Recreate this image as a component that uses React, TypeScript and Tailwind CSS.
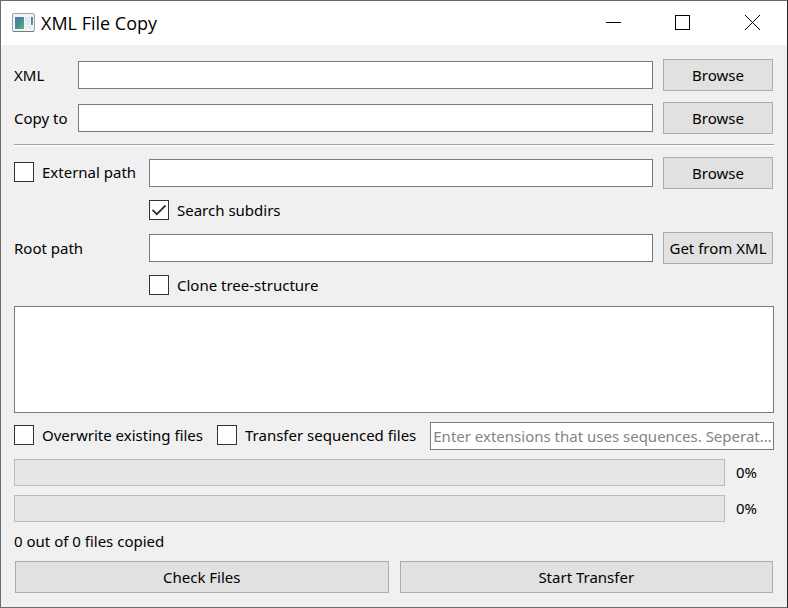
import { useState, type ReactNode } from "react";

const field =
  "h-7 min-w-0 flex-1 rounded-none border border-[#7a7a7a] bg-white pl-0.5 text-ellipsis outline-none placeholder:text-[#848484]";
const button =
  "h-8 rounded-none border border-[#adadad] bg-[#e1e1e1] text-center whitespace-nowrap";

function Check({ label, defaultChecked = false }: { label: string; defaultChecked?: boolean }) {
  return (
    <label className="flex h-[22px] items-center gap-2 pb-0.5 whitespace-nowrap">
      <span className="grid size-5 shrink-0">
        <input
          type="checkbox"
          defaultChecked={defaultChecked}
          className="peer col-start-1 row-start-1 size-5 appearance-none border border-[#333333] bg-white"
        />
        <svg
          viewBox="0 0 20 20"
          className="pointer-events-none invisible col-start-1 row-start-1 size-5 peer-checked:visible"
          fill="none"
          stroke="#333333"
          strokeWidth="1.8"
          aria-hidden="true"
        >
          <path d="M3.5 9.8 L7.8 14.2 L16.5 5.5" />
        </svg>
      </span>
      <span>{label}</span>
    </label>
  );
}

function PathRow({
  id,
  name,
  label,
  labelWidth,
  action,
}: {
  id: string;
  name: string;
  label: ReactNode;
  labelWidth: string;
  action: string;
}) {
  const [value, setValue] = useState("");
  return (
    <div className="flex h-8 items-center">
      <div className={`${labelWidth} shrink-0`}>{label}</div>
      <input
        id={id}
        aria-label={name}
        className={field}
        value={value}
        onChange={(e) => setValue(e.target.value)}
      />
      <button type="button" className={`${button} mr-px ml-2.5 w-[110px]`}>
        {action}
      </button>
    </div>
  );
}

function Progress({ label, value }: { label: string; value: number }) {
  return (
    <div className="flex h-7 items-center gap-[11px]">
      <div
        role="progressbar"
        aria-label={label}
        aria-valuenow={value}
        className="h-[27px] flex-1 border border-[#bcbcbc] bg-[#e6e6e6]"
      >
        <div className="h-full bg-[#06b025]" style={{ width: `${value}%` }} />
      </div>
      <span className="w-[38px]">{value}%</span>
    </div>
  );
}

function AppIcon() {
  return (
    <svg width="24" height="20" viewBox="0 0 24 20" aria-hidden="true">
      <defs>
        <linearGradient id="pane" x1="0" y1="0" x2="1" y2="1">
          <stop offset="0" stopColor="#4a78a8" />
          <stop offset="0.5" stopColor="#3f8f94" />
          <stop offset="1" stopColor="#62b878" />
        </linearGradient>
      </defs>
      <rect x="0.5" y="0.5" width="22" height="18" rx="1.5" fill="#f4f5f6" stroke="#9a9fa2" />
      <path d="M1 18.5 H22" stroke="#777c80" />
      <rect x="3" y="4" width="9" height="12" fill="url(#pane)" />
      <rect x="13" y="4" width="5" height="8" fill="#e3e8ec" />
      <rect x="19" y="4" width="2" height="8" fill="url(#pane)" />
      <rect x="13" y="13" width="8" height="3" fill="#e9ecee" />
    </svg>
  );
}

export default function App() {
  return (
    <main className="flex min-h-screen flex-col border border-[#6b6b6b] border-r-[#262626] bg-[#f0f0f0] font-['Noto_Sans',sans-serif] text-[15px] leading-5 text-black">
      <header className="flex h-11 shrink-0 items-center bg-white pb-px pl-[11px]">
        <AppIcon />
        <h1 className="ml-[5px] flex-1 font-['Open_Sans',sans-serif] text-lg leading-6">XML File Copy</h1>
        <div className="flex h-full">
          <button type="button" aria-label="Minimize" className="grid w-[68px] place-items-center">
            <svg width="15" height="15" viewBox="0 0 15 15" stroke="#000" fill="none">
              <path d="M0 7.5 H15" />
            </svg>
          </button>
          <button type="button" aria-label="Maximize" className="grid w-[71px] place-items-center">
            <svg width="15" height="15" viewBox="0 0 15 15" stroke="#000" fill="none">
              <rect x="0.5" y="0.5" width="14" height="14" />
            </svg>
          </button>
          <button type="button" aria-label="Close" className="grid w-[69px] place-items-center">
            <svg width="15" height="15" viewBox="0 0 15 15" stroke="#000" fill="none">
              <path d="M0 0 L15 15 M15 0 L0 15" />
            </svg>
          </button>
        </div>
      </header>

      <form className="flex flex-1 flex-col px-[13px] pt-3.5 pb-3.5" onSubmit={(e) => e.preventDefault()}>
        <div className="flex flex-col gap-[11px]">
          <PathRow
            id="xml"
            name="XML"
            label={<label htmlFor="xml">XML</label>}
            labelWidth="w-16"
            action="Browse"
          />
          <PathRow
            id="copy-to"
            name="Copy to"
            label={<label htmlFor="copy-to">Copy to</label>}
            labelWidth="w-16"
            action="Browse"
          />
        </div>

        <hr className="mt-2.5 mb-[11px] h-0.5 border-t border-b border-t-[#a0a0a0] border-b-white" />

        <PathRow
          id="external-path"
          name="External path location"
          label={<Check label="External path" />}
          labelWidth="w-[135px]"
          action="Browse"
        />
        <div className="mt-[11px] mb-2.5 pl-[135px]">
          <Check label="Search subdirs" defaultChecked />
        </div>
        <PathRow
          id="root-path"
          name="Root path"
          label={<label htmlFor="root-path">Root path</label>}
          labelWidth="w-[135px]"
          action="Get from XML"
        />
        <div className="mt-[11px] mb-[9px] pl-[135px]">
          <Check label="Clone tree-structure" />
        </div>

        <textarea
          aria-label="Log"
          readOnly
          className="min-h-[100px] flex-1 resize-none rounded-none border border-[#7a7a7a] bg-white p-1 outline-none"
        />

        <div className="mt-[9px] flex h-7 items-center gap-3.5">
          <Check label="Overwrite existing files" />
          <Check label="Transfer sequenced files" />
          <input
            aria-label="Sequence extensions"
            className={field}
            placeholder="Enter extensions that uses sequences. Seperate with comma"
          />
        </div>

        <div className="mt-2 flex flex-col gap-2">
          <Progress label="Current file" value={0} />
          <Progress label="All files" value={0} />
        </div>

        <p className="mt-[9px] mb-2.5">0 out of 0 files copied</p>

        <div className="flex gap-[11px] px-px">
          <button type="button" className={`${button} flex-1`}>
            Check Files
          </button>
          <button type="submit" className={`${button} flex-1`}>
            Start Transfer
          </button>
        </div>
      </form>
    </main>
  );
}
